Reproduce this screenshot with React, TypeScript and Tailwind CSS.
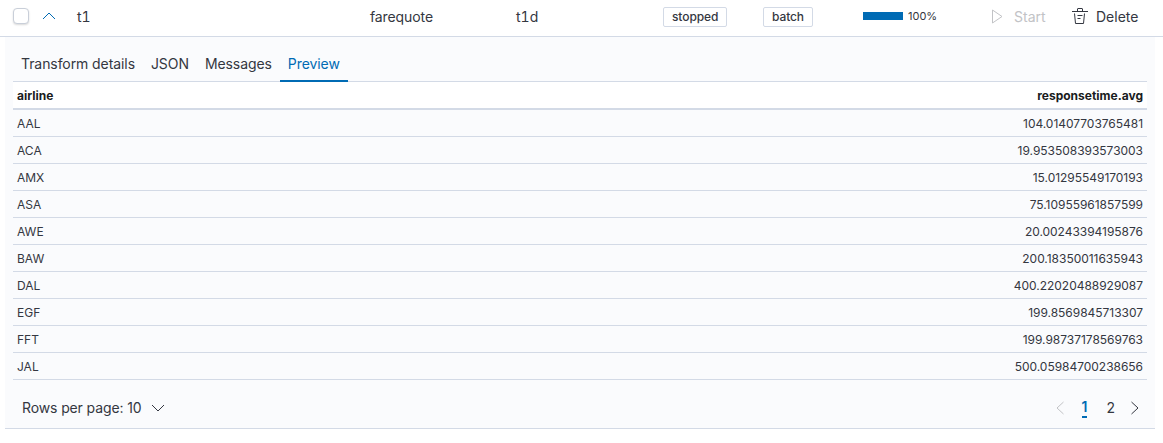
const ROWS = [
  ["AAL", "104.01407703765481"],
  ["ACA", "19.953508393573003"],
  ["AMX", "15.01295549170193"],
  ["ASA", "75.10955961857599"],
  ["AWE", "20.00243394195876"],
  ["BAW", "200.18350011635943"],
  ["DAL", "400.22020488929087"],
  ["EGF", "199.8569845713307"],
  ["FFT", "199.98737178569763"],
  ["JAL", "500.05984700238656"],
];

const TABS = ["Transform details", "JSON", "Messages", "Preview"];

function Badge({ label }: { label: string }) {
  return (
    <span className="flex h-[20px] items-center rounded-[2px] border border-[#d3dae6] bg-white px-[8px] text-[12px] font-medium tracking-[-0.1px] text-[#343741]">
      {label}
    </span>
  );
}

export default function App() {
  return (
    <div className="h-[443px] w-[1163px] overflow-hidden bg-white font-['Inter',sans-serif] text-[#343741]">
      {/* Transform row */}
      <div className="flex h-[37px] items-center border-b border-[#d3dae6] pb-[4px] pl-[13px] text-[14px]">
        <span className="h-[16px] w-[16px] rounded-[4px] border border-[#c9cfd9] bg-white shadow-[0_1px_2px_rgba(0,0,0,0.15)]" />
        <svg className="ml-[12px] h-[16px] w-[16px]" viewBox="0 0 16 16" fill="none" stroke="#006bb4" strokeWidth="1">
          <path d="M2 11 8 5l6 6" />
        </svg>
        <span className="ml-[20px] w-[293px] tabular-nums">t1</span>
        <span className="w-[146px] tracking-[-0.1px]">farequote</span>
        <span className="w-[147px] tabular-nums">t1d</span>
        <div className="w-[100px]">
          <span className="inline-flex"><Badge label="stopped" /></span>
        </div>
        <div className="w-[100px]">
          <span className="inline-flex"><Badge label="batch" /></span>
        </div>
        <div className="flex w-[127px] items-center">
          <span className="h-[8px] w-[40px] bg-[#006bb4]" />
          <span className="ml-[5px] text-[11px]">100%</span>
        </div>
        <svg className="h-[16px] w-[16px]" viewBox="0 0 16 16" fill="none" stroke="#c2c3c6" strokeWidth="1">
          <path d="M2.500 2v13l9.500-6.500z" />
        </svg>
        <span className="ml-[8px] w-[58px] text-[#c2c3c6]">Start</span>
        <svg className="h-[16px] w-[16px]" viewBox="0 0 16 16" fill="none" stroke="#343741" strokeWidth="1">
          <path d="M0 3.500h16M5.500 3.500V1a.5.5 0 0 1 .5-.5h4a.5.5 0 0 1 .5.5v2.500M2.500 5.500l1 10h8l1-10M5.500 7.500h5M5.500 10.500h3" />
        </svg>
        <span className="ml-[8px]">Delete</span>
      </div>

      {/* Expanded panel */}
      <div className="mx-[5px] w-[1150px] border-b border-[#d3dae6] bg-[#fafbfd] px-[8px]">
        <div className="flex h-[45px] items-end border-b border-[#d3dae6] text-[14px] tracking-[-0.08px]">
          {TABS.map((tab) => (
            <span
              key={tab}
              className={
                tab === "Preview"
                  ? "-mb-[1px] flex h-[36px] items-center border-b-2 border-[#006bb4] px-[8px] text-[#006bb4]"
                  : "-mb-[1px] flex h-[36px] items-center border-b-2 border-transparent px-[8px]"
              }
            >
              {tab}
            </span>
          ))}
        </div>

        <div className="w-[1134px] text-[12px]">
          <div className="flex h-[28px] items-center justify-between border-b-2 border-[#d3dae6] bg-white px-[4px] pt-[1px] font-bold text-[#1a1c21]">
            <span>airline</span>
            <span>responsetime.avg</span>
          </div>
          {ROWS.map(([airline, avg]) => (
            <div key={airline} className="flex h-[27px] items-center justify-between border-b border-[#d3dae6] px-[4px] pt-[1px]">
              <span>{airline}</span>
              <span className="tracking-[-0.03px]">{avg}</span>
            </div>
          ))}
        </div>

        <div className="flex h-[48px] items-center justify-between pl-[9px] pr-[4px] pt-[7px] text-[14px]">
          <div className="flex items-center">
            <span className="tracking-[-0.12px]">Rows per page: 10</span>
            <svg className="ml-[9px] h-[16px] w-[16px]" viewBox="0 0 16 16" fill="none" stroke="#343741" strokeWidth="1">
              <path d="M2 5l6 6 6-6" />
            </svg>
          </div>
          <div className="flex items-center">
            <svg className="h-[16px] w-[16px]" viewBox="0 0 16 16" fill="none" stroke="#c2c3c6" strokeWidth="1">
              <path d="M11.500 2 5 8l6.500 6" />
            </svg>
            <span className="ml-[14px] border-b-2 border-[#006bb4] font-semibold leading-[19px] text-[#006bb4]">1</span>
            <span className="ml-[19px]">2</span>
            <svg className="ml-[12px] h-[16px] w-[16px]" viewBox="0 0 16 16" fill="none" stroke="#343741" strokeWidth="1">
              <path d="M4.500 2 11 8l-6.500 6" />
            </svg>
          </div>
        </div>
      </div>
    </div>
  );
}
